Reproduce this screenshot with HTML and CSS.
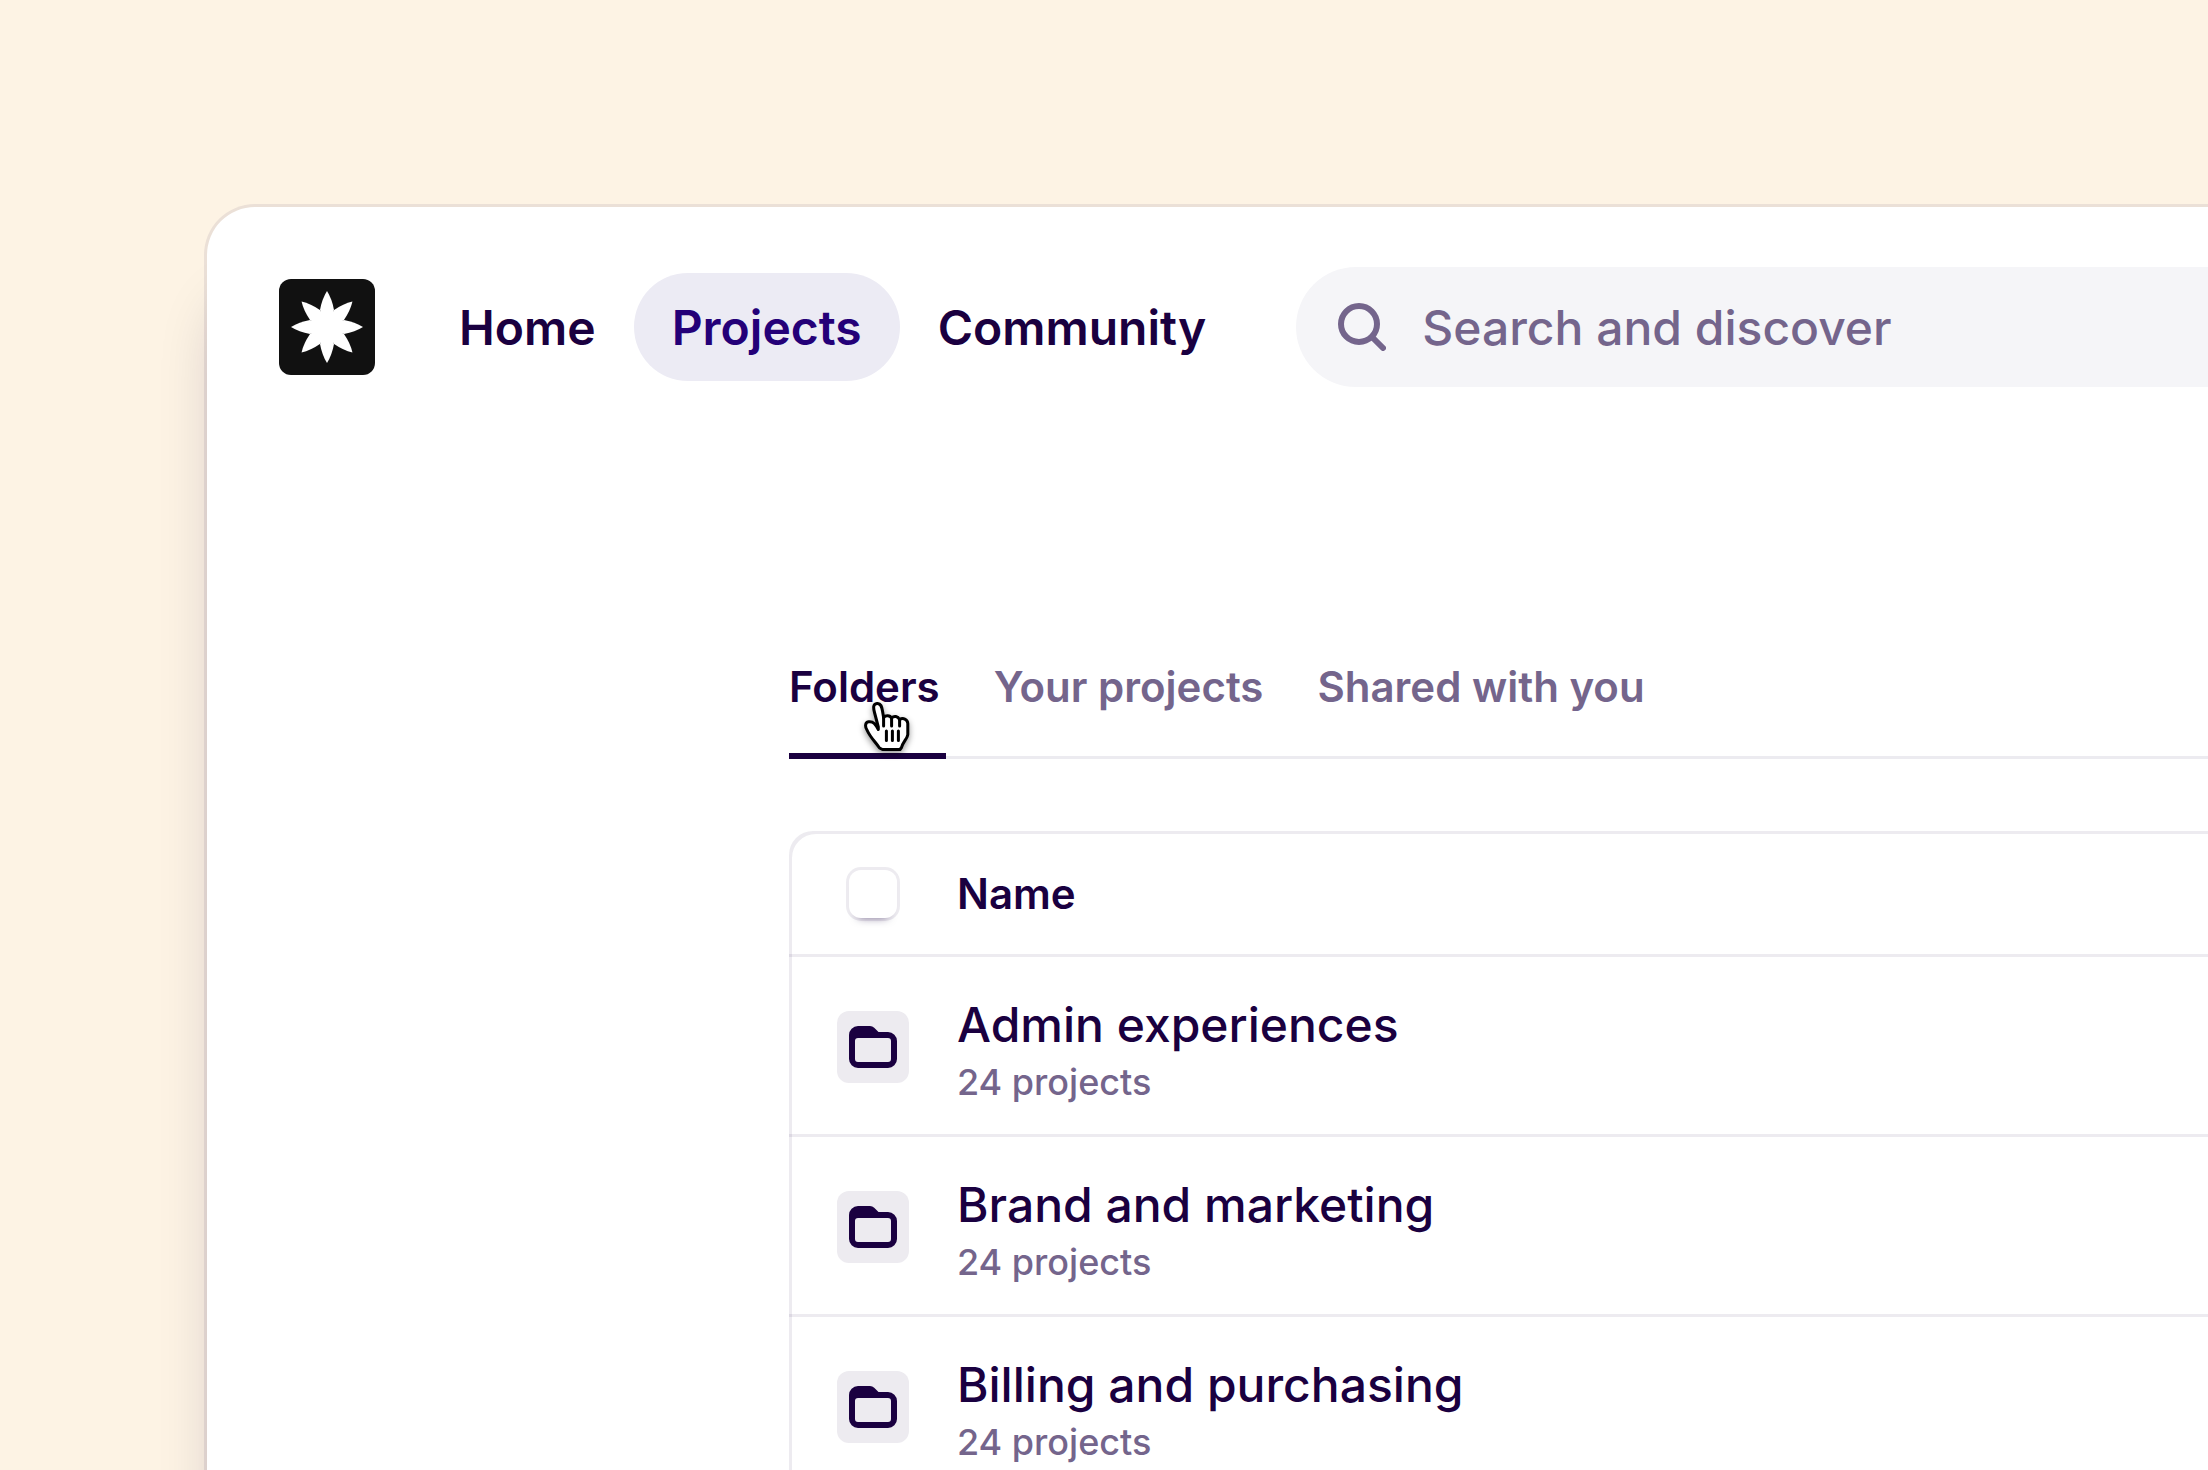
FILE: index.html
```html
<!DOCTYPE html>
<html lang="en">
<head>
<meta charset="utf-8">
<title>Projects</title>
<link rel="stylesheet" href="styles.css">
</head>
<body>
<svg class="sprite" aria-hidden="true">
  <symbol id="folder" viewBox="0 0 48 42">
    <path fill-rule="evenodd" d="M9 0H21Q23.500 0 25.200 1.700L29.500 6H39A9 9 0 0 1 48 15V33A9 9 0 0 1 39 42H9A9 9 0 0 1 0 33V9A9 9 0 0 1 9 0ZM9 12A3 3 0 0 0 6 15V33A3 3 0 0 0 9 36H39A3 3 0 0 0 42 33V15A3 3 0 0 0 39 12Z"/>
  </symbol>
</svg>
<div class="window">
  <header class="topbar">
    <a class="logo" href="#" aria-label="Home page">
      <svg viewBox="-48 -48 96 96" aria-hidden="true">
        <g>
          <path id="petal" d="M-7 -17Q-5 -28 0 -36Q5 -28 7 -17L0 0Z"/>
          <use href="#petal" transform="rotate(45)"/>
          <use href="#petal" transform="rotate(90)"/>
          <use href="#petal" transform="rotate(135)"/>
          <use href="#petal" transform="rotate(180)"/>
          <use href="#petal" transform="rotate(225)"/>
          <use href="#petal" transform="rotate(270)"/>
          <use href="#petal" transform="rotate(315)"/>
        </g>
        <circle r="17"/>
      </svg>
    </a>
    <nav class="nav">
      <a class="nav-link" href="#">Home</a>
      <a class="nav-link is-active" href="#" aria-current="page">Projects</a>
      <a class="nav-link" href="#">Community</a>
    </nav>
    <label class="search">
      <svg class="search-icon" viewBox="0 0 48 48" aria-hidden="true"><circle cx="21" cy="21" r="18"/><path d="M34 34L45 45"/></svg>
      <input class="search-input" type="search" placeholder="Search and discover" aria-label="Search and discover">
    </label>
  </header>
  <main class="content">
    <div class="tabs" role="tablist">
      <button class="tab is-selected" type="button" role="tab" aria-selected="true">Folders
        <svg class="pointer" viewBox="0 0 48 51" aria-hidden="true"><path class="hand" d="M14.300 27.500V25L10.500 10.500C9.200 5.500 9 2 13 1.500C17 1 17.800 5 18.500 9L19.600 15.500C21.500 13 26 13 27.500 16C30 13.500 34 14 35.500 17.500C39 15.500 43.500 17 43.800 21.500V32.500C43.500 36.500 38.500 40.500 37.500 45.500L36 47.500H18.500L15.500 46C11 39.500 6 35 3 28C1 25 .8 20.500 4.500 19.800C9.500 19 11.500 22.500 14.300 27.500Z"/><path class="crease" d="M19.600 15V24M27.600 16V24M35.600 17.500V24M22.400 29V38.500M28.400 29V38.500M34.400 29V38.500"/></svg>
      </button>
      <button class="tab" type="button" role="tab" aria-selected="false">Your projects</button>
      <button class="tab" type="button" role="tab" aria-selected="false">Shared with you</button>
    </div>
    <div class="table-frame">
      <table class="folders">
        <thead>
          <tr>
            <th class="cell-mark"><input class="checkbox" type="checkbox" aria-label="Select all folders"></th>
            <th class="cell-name" scope="col">Name</th>
          </tr>
        </thead>
        <tbody>
          <tr>
            <td class="cell-mark"><span class="badge"><svg class="folder-icon" aria-hidden="true"><use href="#folder"/></svg></span></td>
            <td class="cell-name"><span class="title">Admin experiences</span><span class="count">24 projects</span></td>
          </tr>
          <tr>
            <td class="cell-mark"><span class="badge"><svg class="folder-icon" aria-hidden="true"><use href="#folder"/></svg></span></td>
            <td class="cell-name"><span class="title">Brand and marketing</span><span class="count">24 projects</span></td>
          </tr>
          <tr>
            <td class="cell-mark"><span class="badge"><svg class="folder-icon" aria-hidden="true"><use href="#folder"/></svg></span></td>
            <td class="cell-name"><span class="title">Billing and purchasing</span><span class="count">24 projects</span></td>
          </tr>
        </tbody>
      </table>
    </div>
  </main>
</div>
</body>
</html>
```
FILE: styles.css
```css
:root {
  --ink: #1a0040;
  --muted: #74658c;
  --line: rgba(26, 0, 64, .08);
}

* { box-sizing: border-box; }

body {
  margin: 0;
  height: 100vh;
  overflow: hidden;
  padding: 207px 0 0 207px;
  background: #fdf3e4;
  color: var(--ink);
  font-family: Inter, "Liberation Sans", sans-serif;
  font-size: 48px;
  font-optical-sizing: none;
  -webkit-font-smoothing: antialiased;
}

.sprite { position: absolute; width: 0; height: 0; }

.window {
  min-height: 100vh;
  border-top-left-radius: 48px;
  background: #fff;
  box-shadow: 0 0 0 3px var(--line), 0 84px 60px -12px rgba(26, 0, 64, .2);
}

.topbar {
  display: flex;
  align-items: center;
  padding: 60px 0 0 72px;
}

.logo {
  flex: none;
  width: 96px;
  height: 96px;
  border-radius: 12px;
  background: #111;
}
.logo svg { display: block; fill: #fff; }

.nav { display: flex; margin-left: 46px; }

.nav-link {
  padding: 25px 38px 23px;
  border-radius: 54px;
  color: var(--ink);
  font-weight: 600;
  line-height: 60px;
  text-decoration: none;
}
.nav-link.is-active { background: #ecebf4; color: #240078; }

.search {
  display: flex;
  flex: 1;
  align-items: center;
  gap: 36px;
  height: 120px;
  margin-left: 52px;
  padding-left: 42px;
  border-radius: 60px 0 0 60px;
  background: #f5f5f8;
}
.search-icon {
  flex: none;
  width: 48px;
  height: 48px;
  fill: none;
  stroke: var(--muted);
  stroke-width: 6;
  stroke-linecap: round;
}
.search-input {
  flex: 1;
  min-width: 0;
  padding: 0;
  border: 0;
  outline: 0;
  background: none;
  color: var(--ink);
  font: inherit;
  font-weight: 500;
}
.search-input::placeholder { color: var(--muted); opacity: 1; }

.content { margin-left: 582px; }

.tabs {
  display: flex;
  gap: 48px;
  margin-top: 252px;
  box-shadow: inset 0 -3px #ecebf0;
}
.tab {
  position: relative;
  padding: 21px 6px 39px 0;
  border: 0;
  border-bottom: 6px solid transparent;
  background: none;
  color: var(--muted);
  font: inherit;
  font-size: 42px;
  font-weight: 600;
  line-height: 54px;
}
.tab.is-selected { border-color: var(--ink); color: var(--ink); }

.pointer {
  position: absolute;
  left: 75px;
  bottom: 0;
  width: 48px;
  height: 51px;
  overflow: visible;
  filter: drop-shadow(0 3px 3px rgba(0, 0, 0, .4));
}
.hand { fill: #fff; stroke: #000; stroke-width: 3; stroke-linejoin: round; }
.crease { fill: none; stroke: #000; stroke-width: 3; stroke-linecap: round; }

.table-frame {
  margin-top: 72px;
  padding-top: 3px;
  border-radius: 24px 0 0;
  box-shadow: inset 3px 3px var(--line);
}
.folders { width: 100%; border-collapse: separate; border-spacing: 0; }
.folders th, .folders td {
  height: 180px;
  padding: 0;
  border-bottom: 3px solid var(--line);
  text-align: left;
}
.folders th { height: 123px; font-size: 42px; font-weight: 600; line-height: 54px; }
.folders .cell-mark { width: 168px; padding-left: 48px; }
.folders td.cell-mark { padding-top: 3px; }
.folders td.cell-name { padding-top: 12px; }

.checkbox {
  display: block;
  width: 48px;
  height: 48px;
  margin: 0 0 0 12px;
  appearance: none;
  border-radius: 12px;
  background: #fff;
  box-shadow: 0 0 0 3px var(--line), 0 9px 9px -9px rgba(26, 0, 64, .5);
}

.badge {
  display: flex;
  align-items: center;
  justify-content: center;
  width: 72px;
  height: 72px;
  border-radius: 12px;
  background: #edebf0;
}
.folder-icon { width: 48px; height: 42px; fill: var(--ink); }

.title, .count { display: block; }
.title { font-weight: 500; line-height: 60px; }
.count { color: var(--muted); font-size: 36px; font-weight: 500; line-height: 54px; }
```
